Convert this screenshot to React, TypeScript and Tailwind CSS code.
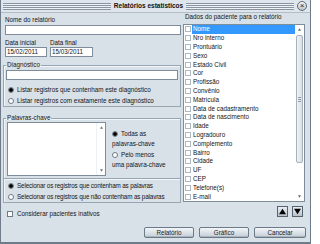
import React from "react";

/* Janela "Relatórios estatísticos" — diálogo no estilo de tema Windows azul-acinzentado. */

const FIELDS = [
  "Nome", "Nro interno", "Prontuário", "Sexo", "Estado Civil", "Cor", "Profissão",
  "Convênio", "Matrícula", "Data de cadastramento", "Data de nascimento", "Idade",
  "Logradouro", "Complemento", "Bairro", "Cidade", "UF", "CEP", "Telefone(s)", "E-mail",
];

const STRIPES =
  "bg-[image:repeating-linear-gradient(to_bottom,#8995a2_0,#8995a2_1px,#eef1f4_1px,#eef1f4_2px)]";

function Radio({ on }: { on?: boolean }) {
  return (
    <span className="flex size-[6px] shrink-0 items-center justify-center rounded-full border border-[#6d7a88] bg-white">
      {on && <span className="size-[4px] rounded-full bg-black" />}
    </span>
  );
}

function Check() {
  return <span className="size-[6px] shrink-0 border border-[#aeb8c2] bg-white" />;
}

function Input({ className = "", value = "" }: { className?: string; value?: string }) {
  return (
    <div className={"flex h-[10px] items-center border border-[#7f8c99] bg-white pl-[1px] " + className}>
      {value}
    </div>
  );
}

function Button({ label, w }: { label: string; w: string }) {
  return (
    <button
      className={
        "flex h-[11px] items-center justify-center rounded-[2px] border border-[#6c7986] bg-gradient-to-b from-[#f3f6f9] to-[#c4cdd7] text-[6.3px] text-[#1b1b1b] shadow-[inset_0_-1px_0_#a9b4bf] " +
        w
      }
    >
      {label}
    </button>
  );
}

function Tri({ up, size = 5, color = "#000" }: { up?: boolean; size?: number; color?: string }) {
  return (
    <svg width={size} height={size} viewBox="0 0 10 10">
      <path d={up ? "M5 1 L10 9 L0 9 Z" : "M0 1 L10 1 L5 9 Z"} fill={color} />
    </svg>
  );
}

export default function App() {
  return (
    <div className="flex h-[244px] w-[311px] flex-col border-x border-b-2 border-[#6e7b88] bg-[#d8e0e8] font-['Liberation_Sans',Arial,sans-serif] text-[6.3px] leading-[8px] text-[#141414]">
      {/* barra de título */}
      <div className="flex h-[13px] shrink-0 items-center gap-[3px] border-b border-[#b3bdc8] bg-[#dfe5ec] pl-[2px] pr-[3px]">
        <div className={"h-[7px] flex-1 " + STRIPES} />
        <span className="text-[6.5px] font-bold leading-[8px] text-[#111]">Relatórios estatísticos</span>
        <div className={"h-[7px] flex-1 " + STRIPES} />
        <span className="flex size-[10px] items-center justify-center rounded-full border border-[#5f6b78] bg-gradient-to-b from-[#f4f6f8] to-[#b8c2cc] text-[8px] leading-none text-[#222]">
          ×
        </span>
      </div>

      <div className="flex">
        {/* coluna esquerda */}
        <div className="ml-[2px] flex w-[178px] flex-col">
          <span className="mt-[3px] pl-[2px]">Nome do relatório</span>
          <Input className="ml-[2px] mt-[1px]" />

          <div className="ml-[2px] mt-[4px] flex gap-[3px]">
            <div className="flex flex-col">
              <span>Data inicial</span>
              <Input className="w-[42px]" value="15/02/2011" />
            </div>
            <div className="flex flex-col">
              <span>Data final</span>
              <Input className="w-[43px]" value="15/03/2011" />
            </div>
          </div>

          <fieldset className="mt-[4px] border border-[#98a5b2] shadow-[inset_1px_1px_0_#f3f6f9]">
            <legend className="ml-[2px] px-[1px]">Diagnóstico</legend>
            <Input className="ml-[2px] mr-[2px] mt-[1px]" />
            <div className="mt-[4px] flex h-[11px] items-center gap-[3px] pl-[4px]">
              <Radio on /> Listar registros que contenham este diagnóstico
            </div>
            <div className="flex h-[11px] items-center gap-[3px] pl-[4px]">
              <Radio /> Listar registros com exatamente este diagnóstico
            </div>
          </fieldset>

          <fieldset className="mt-[7px] border border-[#98a5b2] shadow-[inset_1px_1px_0_#f3f6f9]">
            <legend className="ml-[2px] px-[1px]">Palavras-chave</legend>
            <div className="flex">
              <div className="ml-[3px] flex h-[54px] w-[99px] border border-[#7f8c99] bg-white">
                <div className="flex-1" />
                <div className="flex w-[9px] flex-col items-center justify-between border-l border-[#eef1f4] py-[3px]">
                  <Tri up size={3} color="#6a7683" />
                  <Tri size={3} color="#6a7683" />
                </div>
              </div>
              <div className="ml-[6px] flex flex-col justify-center gap-[1px] leading-[10px]">
                <div>
                  <div className="flex items-center gap-[3px]"><Radio on />Todas as</div>
                  <div>palavras-chave</div>
                </div>
                <div>
                  <div className="flex items-center gap-[3px]"><Radio />Pelo menos</div>
                  <div>uma palavra-chave</div>
                </div>
              </div>
            </div>
            <div className="mt-[2px] h-px bg-[#98a5b2] shadow-[0_1px_0_#f3f6f9]" />
            <div className="mt-[1px] flex h-[11px] items-center gap-[3px] pl-[4px] tracking-[-0.15px]">
              <Radio on /> Selecionar os registros que contenham as palavras
            </div>
            <div className="flex h-[11px] items-center gap-[3px] pl-[4px] tracking-[-0.15px]">
              <Radio /> Selecionar os registros que não contenham as palavras
            </div>
          </fieldset>

          <div className="mt-[6px] flex h-[10px] items-center gap-[4px] pl-[4px]">
            <span className="size-[6px] border border-[#6d7a88] bg-white" />
            Considerar pacientes inativos
          </div>
        </div>

        {/* coluna direita */}
        <div className="ml-[2px] flex w-[122px] flex-col">
          <span className="pl-[2px]">Dados do paciente para o relatório</span>
          <div className="mt-[3px] flex h-[178px] border border-[#7f8c99] bg-white">
            <div className="flex-1 overflow-hidden">
              {FIELDS.map((f, i) => (
                <div key={f} className="flex h-[8.8px] items-center gap-[1px] pl-[1px]">
                  <Check />
                  <span
                    className={
                      "flex h-[8.8px] flex-1 items-center pl-[1px] " +
                      (i === 0 ? "bg-[#3399ff] text-white" : "")
                    }
                  >
                    {f}
                  </span>
                </div>
              ))}
            </div>
            <div className="flex w-[9px] flex-col items-center">
              <div className="flex h-[9px] items-center"><Tri up size={3} color="#5d6975" /></div>
              <div className="mt-[1px] flex h-[128px] w-[7px] items-center justify-center rounded-[2px] border border-[#a7b1bb] bg-gradient-to-r from-[#f1f3f5] to-[#d9dfe5]">
                <div className="flex flex-col gap-[1px]">
                  <span className="h-px w-[3px] bg-[#8f9aa5]" />
                  <span className="h-px w-[3px] bg-[#8f9aa5]" />
                  <span className="h-px w-[3px] bg-[#8f9aa5]" />
                </div>
              </div>
              <div className="mt-auto flex h-[9px] items-center"><Tri size={3} color="#5d6975" /></div>
            </div>
          </div>
          <div className="mt-[4px] flex justify-end gap-[4px] pr-[2px]">
            <button className="flex size-[11px] items-center justify-center border border-[#56626e] bg-gradient-to-b from-[#e9eef3] to-[#b9c3cd]">
              <Tri up size={7} />
            </button>
            <button className="flex size-[11px] items-center justify-center border border-[#56626e] bg-gradient-to-b from-[#e9eef3] to-[#b9c3cd]">
              <Tri size={7} />
            </button>
          </div>
        </div>
      </div>

      {/* botões */}
      <div className="mb-[4px] mt-auto flex justify-end gap-[5px] pr-[4px]">
        <Button label="Relatório" w="w-[50px]" />
        <Button label="Gráfico" w="w-[50px]" />
        <Button label="Cancelar" w="w-[52px]" />
      </div>
    </div>
  );
}
